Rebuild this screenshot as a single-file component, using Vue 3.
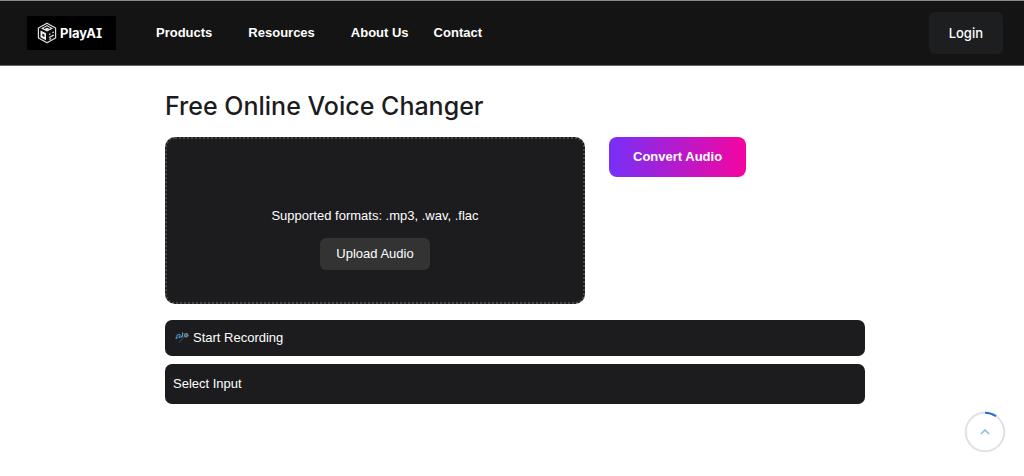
<script setup>
import { ref } from 'vue'

const links = [
  { label: 'Products', menu: true },
  { label: 'Resources', menu: true },
  { label: 'About Us', menu: false },
  { label: 'Contact', menu: false }
]
const input = ref('')
</script>

<template>
  <div class="page">
    <header class="header">
      <a class="brand" href="#">
        <svg class="brand-mark" viewBox="0 0 20 22" aria-hidden="true">
          <path d="M10 1.2 18.6 6v10L10 20.8 1.4 16V6Z" fill="#0a0a0a" stroke="#ddd" stroke-width="1.2" stroke-linejoin="round" />
          <path d="M10 3.1 16 6.5 10 9.6 4 6.5Z" fill="#e0e0e0" />
          <path d="M7 6.6 10 4.9l3 1.7" fill="none" stroke="#0a0a0a" stroke-width="1.1" />
          <path d="M3.5 8.4 9 11.3v7L3.5 15.2Z" fill="#f2f2f2" />
          <path d="m5.4 11.4 2 1.1v2.6l-2-1.1Z" fill="#0a0a0a" />
          <path d="m12 12.5 1.4-.7M15.4 10.8l1.4-.8M12 15.5l4.7-2.4M12.4 17.4l1.8-.9" fill="none" stroke="#ddd" stroke-width="1.2" />
        </svg>
        <span class="brand-name">PlayAI</span>
      </a>
      <nav class="nav" aria-label="Main">
        <a v-for="link in links" :key="link.label" href="#" :class="['nav-link', { 'has-menu': link.menu }]">{{ link.label }}</a>
      </nav>
      <button class="login" type="button">Login</button>
    </header>

    <main class="main">
      <h1 class="title">Free Online Voice Changer</h1>
      <div class="convert-row">
        <section class="dropzone">
          <p class="formats">Supported formats: .mp3, .wav, .flac</p>
          <button class="upload" type="button">Upload Audio</button>
        </section>
        <button class="convert" type="button">Convert Audio</button>
      </div>
      <button class="record" type="button">
        <svg class="record-icon" viewBox="0 0 14 14" aria-hidden="true">
          <path d="m10.2 6-5.6 6.1-1-.9L8.7 5Z" fill="#35393f" />
          <circle cx="11.2" cy="4.2" r="2.3" fill="#7d8b92" />
          <path d="m9.8 3 2.8 2.6M12.4 2.8 10 5.4" stroke="#34434b" stroke-width=".6" />
          <path d="M2 7V4l3-.7V6M7.5 5.4V1.6l1 1" fill="none" stroke="#4a95d4" stroke-width="1" />
          <circle cx="1.4" cy="7" r="1" fill="#4a95d4" />
          <circle cx="4.5" cy="6.2" r="1" fill="#4a95d4" />
          <circle cx="6.8" cy="5.6" r="1" fill="#4a95d4" />
        </svg>
        <span>Start Recording</span>
      </button>
      <select v-model="input" class="input-select" aria-label="Select Input">
        <option value="">Select Input</option>
      </select>
    </main>

    <button class="to-top" type="button" aria-label="Back to top">
      <svg viewBox="0 0 42 42" aria-hidden="true">
        <circle cx="21" cy="21" r="19.3" fill="#fff" stroke="#dfe1e4" stroke-width="2" />
        <path d="M21 1.7A19.3 19.3 0 0 1 32 5.1" fill="none" stroke="#2472c8" stroke-width="2" />
        <path d="m17 23 4-4 4 4" fill="none" stroke="#92bce8" stroke-width="1.7" />
      </svg>
    </button>
  </div>
</template>

<style>
body {
  margin: 0;
  background: #fff;
}
</style>

<style scoped>
.page {
  font-family: "Liberation Sans", Arial, sans-serif;
  font-size: 13px;
  color: #fff;
}
button,
select {
  border: 0;
  margin: 0;
  color: #fff;
  font: inherit;
  cursor: pointer;
}
.header {
  box-sizing: border-box;
  height: 66px;
  display: flex;
  align-items: center;
  padding: 0 21px 0 27px;
  background: #141414;
  border-top: 1px solid #8a8a8a;
  border-bottom: 1px solid #666;
}
.brand {
  box-sizing: border-box;
  width: 89px;
  height: 34px;
  display: flex;
  align-items: center;
  gap: 3px;
  padding-left: 10px;
  background: #000;
  color: #fff;
  text-decoration: none;
}
.brand-mark {
  width: 20px;
  height: 22px;
}
.brand-name {
  font: 700 13px/20px Inter, sans-serif;
  font-feature-settings: "cv08";
}
.nav {
  display: flex;
  margin-left: 40px;
}
.nav-link {
  margin-right: 25px;
  color: #fff;
  font-weight: 700;
  line-height: 20px;
  text-decoration: none;
}
.has-menu {
  margin-right: 36px;
}
.login {
  margin-left: auto;
  padding: 11px 20px;
  border-radius: 6px;
  background: #1c1e1f;
  font: 500 13px/20px Inter, sans-serif;
}
.main {
  max-width: 700px;
  margin: 0 auto;
  padding: 23px 0 48px 6px;
}
.title {
  margin: 0 0 14px;
  color: #1c1c1e;
  font: 500 25px/34px Inter, sans-serif;
}
.convert-row {
  display: flex;
  align-items: flex-start;
  gap: 24px;
}
.dropzone {
  box-sizing: border-box;
  flex: 0 1 60%;
  display: flex;
  flex-direction: column;
  align-items: center;
  gap: 12px;
  padding: 67px 16px 32px;
  border: 2px dotted #4a4a4a;
  border-radius: 10px;
  background: #1c1c1e;
}
.formats {
  margin: 0;
  line-height: 20px;
}
.upload {
  padding: 6px 16px;
  border-radius: 6px;
  background: #333;
  line-height: 20px;
}
.convert {
  padding: 10px 24px;
  border-radius: 8px;
  background: linear-gradient(90deg, #7630f7, #f505a0);
  font-weight: 700;
  line-height: 20px;
}
.record {
  width: 100%;
  display: flex;
  align-items: center;
  gap: 4px;
  margin-top: 16px;
  padding: 8px 10px;
  border-radius: 7px;
  background: #1c1c1e;
  line-height: 20px;
}
.record-icon {
  width: 14px;
  height: 14px;
}
.input-select {
  appearance: none;
  width: 100%;
  display: block;
  margin-top: 8px;
  padding: 10px 8px;
  border-radius: 7px;
  background: #1c1c1e;
  line-height: 20px;
}
.to-top {
  position: fixed;
  right: 18px;
  bottom: 23px;
  width: 42px;
  height: 42px;
  padding: 0;
  border-radius: 50%;
  background: transparent;
}
.to-top svg {
  display: block;
}
</style>
